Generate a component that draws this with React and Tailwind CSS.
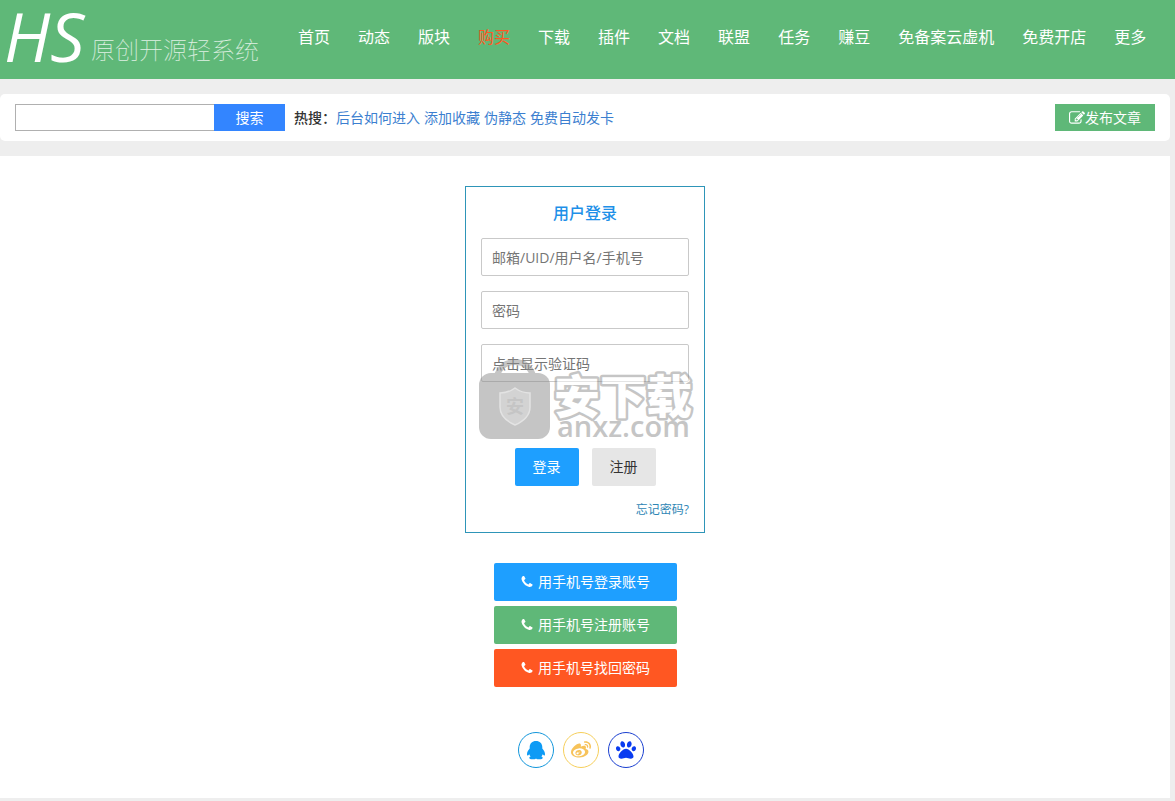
import { FaPaw, FaWeibo } from 'react-icons/fa';

const NAV = ['首页', '动态', '版块', '购买', '下载', '插件', '文档', '联盟', '任务', '赚豆', '免备案云虚机', '免费开店', '更多'];

const HOT = ['后台如何进入', '添加收藏', '伪静态', '免费自动发卡'];

const PHONE_ACTIONS = [
  { label: '用手机号登录账号', color: 'bg-[#1e9fff]' },
  { label: '用手机号注册账号', color: 'bg-[#5fb878]' },
  { label: '用手机号找回密码', color: 'bg-[#ff5722]' },
];

const SOCIALS = [
  { label: 'QQ', Icon: PenguinIcon, color: 'border-[#1296db] text-[#0e9bf5]' },
  { label: '微博', Icon: FaWeibo, color: 'border-[#f6cf5b] text-[#f7c35a]' },
  { label: '百度', Icon: FaPaw, color: 'border-[#1a3fd0] text-[#0a3cf0]' },
];

function PenguinIcon({ className }) {
  return (
    <svg viewBox="0 0 20 20" className={`${className} fill-current`} aria-hidden="true">
      <path d="M10 1C6.200 1 3.700 3.600 3.700 7v1.500C2.400 10 1 12 1 14c0 1.500.6 1.900 1.300 1.200l1-1c.3.900.7 1.600 1.300 2.200-.9.400-1.300.8-1.300 1.400 0 1 1.300 1.500 3.100 1.500 1.600 0 2.900-.3 3.600-.9.700.6 2 .9 3.600.9 1.800 0 3.100-.5 3.100-1.500 0-.6-.4-1-1.300-1.400.6-.6 1-1.300 1.300-2.200l1 1c.7.700 1.300.3 1.300-1.200 0-2-1.400-4-2.700-5.500V7c0-3.400-2.500-6-6.300-6z" />
    </svg>
  );
}

function PhoneIcon() {
  return (
    <svg viewBox="0 0 1792 1792" className="size-[14px] fill-current" aria-hidden="true">
      <path d="M1600 1240q0 27-10 70.5t-21 68.5q-21 50-122 106-94 51-186 51-27 0-53-3.5t-57.5-12.5-47-14.5-55.5-20.5-49-18q-98-35-175-83-127-79-264-216t-216-264q-48-77-83-175-3-9-18-49t-20.5-55.5-14.5-47-12.5-57.5-3.5-53q0-92 51-186 56-101 106-122 25-11 68.5-21t70.5-10q14 0 21 3 18 6 53 76 11 19 30 54t35 63.5 31 53.5q3 4 17.5 25t21.5 35.5 7 28.5q0 20-28.5 50t-62 55-62 53-28.5 46q0 9 5 22.5t8.5 20.5 14 24 11.5 19q76 137 174 235t235 174q2 1 19 11.5t24 14 20.5 8.5 22.500 5q18 0 46-28.5t53-62 55-62 50-28.5q14 0 28.5 7t35.5 21.5 25 17.5q25 15 53.5 31t63.5 35 54 30q70 35 76 53 3 7 3 21z" />
    </svg>
  );
}

function EditIcon() {
  return (
    <svg viewBox="0 0 1792 1792" className="size-4 fill-current" aria-hidden="true">
      <path d="M888 1184l116-116-152-152-116 116v56h96v96h56zm440-720q-16-16-33 1l-350 350q-17 17-1 33t33-1l350-350q17-17 1-33zm80 594v190q0 119-84.5 203.5t-203.5 84.5h-832q-119 0-203.5-84.5t-84.5-203.5v-832q0-119 84.5-203.5t203.5-84.5h832q63 0 117 25 15 7 18 23 3 17-9 29l-49 49q-14 14-32 8-23-6-45-6h-832q-66 0-113 47t-47 113v832q0 66 47 113t113 47h832q66 0 113-47t47-113v-126q0-13 9-22l64-64q15-15 35-7t20 29zm-96-738l288 288-672 672h-288v-288zm444 132l-92 92-288-288 92-92q28-28 68-28t68 28l152 152q28 28 28 68t-28 68z" />
    </svg>
  );
}

function Header() {
  return (
    <header className="flex h-[79px] bg-[#5fb878] text-white">
      <a href="#" className="flex w-[284px] shrink-0 items-start pl-1">
        <span className="w-[87px] text-[68px] leading-[72px] font-medium whitespace-nowrap italic">HS</span>
        <span className="pt-8 text-2xl leading-9 font-thin whitespace-nowrap text-white/80">原创开源轻系统</span>
      </a>
      <nav className="flex pt-[22px] text-base leading-[30px]">
        {NAV.map((item) => (
          <a
            key={item}
            href="#"
            className={`px-[14px] whitespace-nowrap ${item === '购买' ? 'text-[#ff5722]' : ''}`}
          >
            {item}
          </a>
        ))}
      </nav>
    </header>
  );
}

function SearchBar() {
  return (
    <div className="my-[15px] mr-[5px] flex items-center rounded-[5px] bg-white px-[15px] py-[10px]">
      <form className="flex">
        <input
          type="text"
          aria-label="搜索"
          className="h-[27px] w-[199px] border border-r-0 border-[#b0b0b0] px-2 outline-none"
        />
        <button type="button" className="h-[27px] w-[71px] bg-[#3385ff] text-white">搜索</button>
      </form>
      <div className="ml-[9px] font-medium">
        热搜：
        {HOT.map((word) => (
          <a key={word} href="#" className="mr-1 font-normal text-[#3c7fd0]">{word}</a>
        ))}
      </div>
      <a href="#" className="ml-auto flex h-[27px] w-[100px] items-center justify-center bg-[#5fb878] text-white">
        <EditIcon />
        发布文章
      </a>
    </div>
  );
}

function Watermark() {
  return (
    <div className="pointer-events-none absolute top-[171px] left-[13px] text-[#8c8c8c] opacity-50">
      <svg viewBox="0 0 224 92" className="h-[92px] w-[224px]" aria-hidden="true">
        <path d="M18 17C22 7 28 4 36 4s14 3 18 13" fill="none" stroke="currentColor" strokeWidth="6" />
        <rect x="0" y="15" width="71" height="66" rx="12" fill="currentColor" />
        <path
          d="M36 30c4 3 9 5 15 5v14c0 9-6 14-15 18c-9-4-15-9-15-18V35c6 0 11-2 15-5z"
          fill="#a8a8a8"
          stroke="#c8c8c8"
          strokeWidth="1.5"
        />
        <text x="36" y="55" fontSize="18" fontWeight="700" textAnchor="middle" fill="currentColor">安</text>
        <text
          x="75"
          y="55"
          fontSize="46"
          fontWeight="900"
          fill="#fff"
          stroke="currentColor"
          strokeWidth="5"
          strokeLinejoin="round"
          paintOrder="stroke"
        >
          安下载
        </text>
        <text x="78" y="79" fontSize="29" fontWeight="600" fill="currentColor">anxz.com</text>
      </svg>
    </div>
  );
}

function Field({ label, type = 'text' }) {
  return (
    <input
      type={type}
      placeholder={label}
      aria-label={label}
      className="h-[38px] w-full rounded-[2px] border border-[#c9c9c9] px-[10px] outline-none placeholder:text-[#757575]"
    />
  );
}

function LoginCard() {
  return (
    <form className="relative w-[240px] border border-[#2e95b8] px-[15px] pt-[14px] pb-[13px]">
      <h2 className="mb-[13px] text-center text-base leading-6 font-medium text-[#1e90e8]">用户登录</h2>
      <div className="flex flex-col gap-[15px]">
        <Field label="邮箱/UID/用户名/手机号" />
        <Field label="密码" type="password" />
        <Field label="点击显示验证码" />
      </div>
      <div className="mt-[66px] flex justify-center gap-[13px]">
        <button type="button" className="h-[38px] w-16 rounded-[2px] bg-[#1e9fff] text-white">登录</button>
        <button type="button" className="h-[38px] w-16 rounded-[2px] bg-[#e6e6e6] text-[#333]">注册</button>
      </div>
      <div className="mt-[15px] text-right text-xs leading-[18px]">
        <a href="#" className="text-[#2e86b5]">忘记密码?</a>
      </div>
      <Watermark />
    </form>
  );
}

export default function App() {
  return (
    <div
      lang="zh-CN"
      className="flex min-h-screen flex-col bg-[#eee] pb-[3px] font-['Open_Sans','Noto_Sans_CJK_SC',sans-serif] text-sm text-[#333]"
    >
      <Header />
      <SearchBar />
      <main className="mr-[5px] flex grow flex-col items-center bg-white py-[30px]">
        <LoginCard />
        <div className="mt-[30px] flex w-[183px] flex-col gap-[5px]">
          {PHONE_ACTIONS.map(({ label, color }) => (
            <button
              key={label}
              type="button"
              className={`flex h-[38px] items-center justify-center gap-1 rounded-[2px] text-white ${color}`}
            >
              <PhoneIcon />
              {label}
            </button>
          ))}
        </div>
        <div className="mt-[45px] flex gap-[9px] pr-2">
          {SOCIALS.map(({ label, Icon, color }) => (
            <a
              key={label}
              href="#"
              aria-label={label}
              className={`flex size-9 items-center justify-center rounded-full border ${color}`}
            >
              <Icon className="size-5" />
            </a>
          ))}
        </div>
      </main>
    </div>
  );
}
